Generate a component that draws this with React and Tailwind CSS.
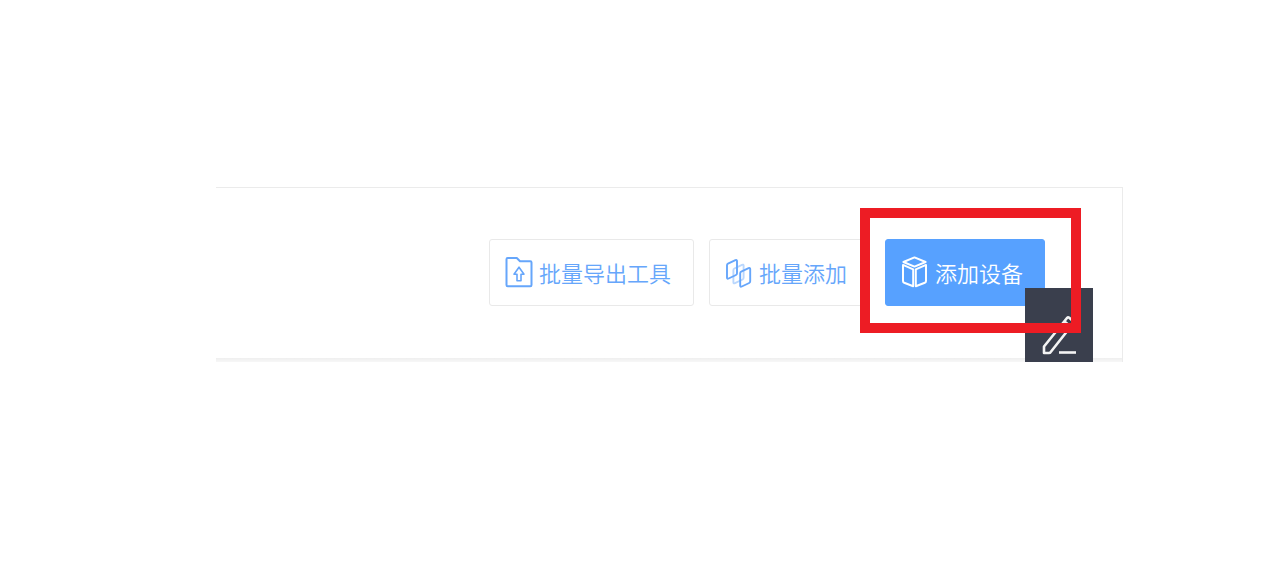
function ExportIcon() {
  return (
    <svg width="28" height="32" viewBox="0 0 28 32" fill="none" stroke="currentColor" strokeWidth="2" strokeLinejoin="round" aria-hidden="true">
      <path d="M1.5 3.2Q1.5 2 2.7 2H11.8L15 5.2H25.3Q26.5 5.2 26.5 6.4V29Q26.5 30.2 25.3 30.2H2.7Q1.5 30.2 1.5 29Z" />
      <path d="M14 11.2L19 18.2H16V24.8H12V18.2H9Z" strokeWidth="1.6" />
    </svg>
  );
}

function BatchIcon() {
  return (
    <svg width="28" height="32" viewBox="0 0 28 32" fill="none" stroke="currentColor" strokeWidth="1.9" strokeLinejoin="round" aria-hidden="true">
      <path d="M8.4 14.2Q8.4 13 9.4 12.5L17 8.9Q18.6 8.2 18.6 9.6V21.8Q18.6 23 17.6 23.5L10 27.1Q8.4 27.8 8.4 26.4Z" opacity="0.45" />
      <path d="M2 9.3Q2 8.1 3 7.6L10.4 4.2Q12 3.5 12 4.9V17.3Q12 18.5 11 19L3.6 22.5Q2 23.2 2 21.8Z" />
      <path d="M15.2 17.3Q15.2 16.1 16.2 15.6L23.6 12.2Q25.2 11.5 25.2 12.9V25.3Q25.2 26.5 24.2 27L16.8 30.5Q15.2 31.2 15.2 29.8Z" />
    </svg>
  );
}

function CubeIcon() {
  return (
    <svg width="28" height="32" viewBox="0 0 28 32" fill="none" stroke="currentColor" strokeWidth="2" strokeLinejoin="round" aria-hidden="true">
      <path d="M13.5 1.4L24.6 6L13.5 10.6L2.4 6Z" />
      <path d="M2 8.9L12.2 13.3V30.2L3.2 26.8Q2 26.3 2 25Z" />
      <path d="M25 8.9L14.8 13.3V30.2L23.8 26.8Q25 26.3 25 25Z" />
    </svg>
  );
}

function EditIcon() {
  return (
    <svg width="36" height="40" viewBox="0 0 36 40" fill="none" stroke="currentColor" strokeWidth="2.6" strokeLinejoin="round" aria-hidden="true">
      <path d="M3 38V31.5L26 3Q27 1.8 28.2 2.8L32.2 6.2Q33.2 7.2 32.4 8.2L9.5 37.2Q9 38 8 38Z" />
      <path d="M23.5 6.5L29.5 11.5" />
      <path d="M18 37.5H35" />
    </svg>
  );
}

const base = 'flex h-[67px] items-center gap-1.5 rounded-[3px] border pb-0.5 pl-[15px] text-[22px] leading-8 font-[350] whitespace-nowrap cursor-pointer';
const outline = 'border-[#e9e9e9] bg-white pr-[22px] text-[#66a6fb]';

export default function App() {
  return (
    <div className="bg-white pt-[187px] pl-[216px] pr-[161px] font-['Noto_Sans_CJK_SC',sans-serif]">
      <section className="relative border-t border-r border-[#ebebeb]">
        <div className="flex justify-end gap-[15px] pt-[51px] pr-[77px] pb-[52px]">
          <button type="button" className={`${base} ${outline}`}>
            <ExportIcon />
            批量导出工具
          </button>
          <button type="button" className={`${base} ${outline}`}>
            <BatchIcon />
            批量添加
          </button>
          <button type="button" className={`${base} border-[#57a1ff] bg-[#57a1ff] pr-[21px] text-white`}>
            <CubeIcon />
            添加设备
          </button>
        </div>
        <div className="h-1 bg-linear-to-b from-[#efefef] to-[#f7f7f7]" />

        {/* floating edit button, cut off by the panel edge */}
        <button
          type="button"
          aria-label="编辑"
          className="absolute right-[29px] bottom-0 flex h-[74px] w-[68px] items-end justify-center bg-[#3a3f4d] pb-[7px] text-[#f4f4f4] cursor-pointer"
        >
          <EditIcon />
        </button>

        {/* highlight around the add device button */}
        <div className="pointer-events-none absolute top-5 right-[41px] h-[125px] w-[221px] border-10 border-[#ed1c24]" />
      </section>
    </div>
  );
}
